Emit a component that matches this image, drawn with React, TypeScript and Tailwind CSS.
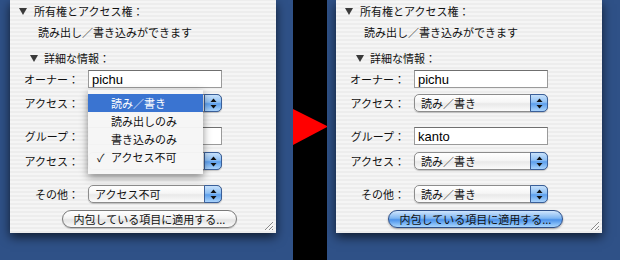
import React from "react";

const JP = "font-['Noto_Sans_CJK_JP','Liberation_Sans',sans-serif]";

function Tri() {
  return (
    <svg width="8" height="7" viewBox="0 0 8 7" className="shrink-0">
      <path d="M0 0H8L4 7Z" fill="#3a3a3a" />
    </svg>
  );
}

function Arrows() {
  return (
    <svg width="7" height="11" viewBox="0 0 7 11">
      <path d="M3.5 0.5L6.5 4H0.5Z" fill="#111" />
      <path d="M3.5 10.5L6.5 7H0.5Z" fill="#111" />
    </svg>
  );
}

function Popup({ text }: { text: string }) {
  return (
    <div className="flex h-[18px] w-[134px] items-stretch rounded-[5px] border border-[#8c8c8c] bg-[linear-gradient(#ffffff,#f6f6f6_45%,#e9e9e9_55%,#fbfbfb)] shadow-[0_1px_1px_rgba(0,0,0,0.2)]">
      <span className="flex flex-1 items-center pl-[6px] text-[11px] leading-none text-[#111]">{text}</span>
      <div className="-my-px -mr-px flex w-[18px] items-center justify-center rounded-r-[5px] border border-[#3a5f99] bg-[linear-gradient(#c7e1fb,#8fc0f4_45%,#5d9fec_55%,#a9d3fc)]">
        <Arrows />
      </div>
    </div>
  );
}

function Field({ text }: { text: string }) {
  return (
    <div className="flex h-[18px] w-[134px] items-center border border-[#9a9a9a] border-t-[#6f6f6f] bg-white pl-[3px] font-['Liberation_Sans',sans-serif] text-[13px] leading-none text-black">
      {text}
    </div>
  );
}

function Row({ label, children, className }: { label: string; children: React.ReactNode; className: string }) {
  return (
    <div className={"flex items-center " + className}>
      <div className="w-[70px] pr-[1px] text-right text-[11px] leading-none text-[#111]">{label}</div>
      <div className="ml-[8px]">{children}</div>
    </div>
  );
}

function Grip() {
  return (
    <svg width="12" height="12" viewBox="0 0 12 12" className="absolute bottom-[2px] right-[2px]">
      <path d="M11 3L3 11M11 7L7 11M11 10L10 11" stroke="#8a8a8a" strokeWidth="1" />
      <path d="M11.5 4L4 11.5M11.5 8L8 11.5" stroke="#ffffff" strokeWidth="1" />
    </svg>
  );
}

function Panel({ left }: { left: boolean }) {
  return (
    <div
      className={
        "relative h-[233px] w-[266px] bg-[repeating-linear-gradient(0deg,#ededed_0px,#ededed_2px,#f5f5f5_2px,#f5f5f5_4px)] shadow-[0_4px_10px_rgba(0,0,0,0.65)] " +
        JP
      }
    >
      <div className="flex flex-col">
        <div className="flex h-[22px] items-center pl-[9px]">
          <Tri />
          <span className="ml-[7px] text-[11px] leading-none text-[#111]">所有権とアクセス権：</span>
        </div>
        <div className="flex h-[20px] items-center pl-[28px] text-[11px] leading-none text-[#111]">
          読み出し／書き込みができます
        </div>
        <div className="mt-[6px] flex h-[20px] items-center pl-[20px]">
          <Tri />
          <span className="ml-[6px] text-[11px] leading-none text-[#111]">詳細な情報：</span>
        </div>
        <Row label="オーナー：" className="mt-[2px]">
          <Field text="pichu" />
        </Row>
        <Row label="アクセス：" className="mt-[6px]">
          <Popup text={left ? "" : "読み／書き"} />
        </Row>
        <Row label="グループ：" className="mt-[15px]">
          <Field text={left ? "" : "kanto"} />
        </Row>
        <Row label="アクセス：" className="mt-[7px]">
          <Popup text={left ? "" : "読み／書き"} />
        </Row>
        <Row label="その他：" className="mt-[15px]">
          <Popup text={left ? "アクセス不可" : "読み／書き"} />
        </Row>
        <div className="ml-[52px] mt-[7px]">
          <div
            className={
              "flex h-[18px] w-[175px] items-center justify-center rounded-full border text-[11px] leading-none text-[#111] " +
              (left
                ? "border-[#7a7a7a] bg-[linear-gradient(#ffffff,#f3f3f3_45%,#e3e3e3_55%,#fafafa)] shadow-[0_1px_1px_rgba(0,0,0,0.2)]"
                : "border-[#2e4f88] bg-[linear-gradient(#cfe5fd,#7fb6f2_45%,#4b92ea_55%,#a8d6fe)] shadow-[0_1px_2px_rgba(0,0,0,0.35)]")
            }
          >
            内包している項目に適用する...
          </div>
        </div>
      </div>
      {left && (
        <div className="absolute left-[78px] top-[90px] w-[115px] bg-[rgba(246,246,246,0.97)] py-[4px] shadow-[0_3px_8px_rgba(0,0,0,0.45)]">
          <div className="flex h-[18px] items-center bg-[#3a74d1] pl-[23px] text-[11px] leading-none text-white">読み／書き</div>
          <div className="flex h-[18px] items-center pl-[23px] text-[11px] leading-none text-[#111]">読み出しのみ</div>
          <div className="flex h-[18px] items-center pl-[23px] text-[11px] leading-none text-[#111]">書き込みのみ</div>
          <div className="flex h-[18px] items-center pl-[9px] text-[11px] leading-none text-[#111]">
            <span className="w-[14px]">✓</span>アクセス不可
          </div>
          <div className="h-[4px]" />
        </div>
      )}
      <Grip />
    </div>
  );
}

export default function App() {
  return (
    <div className="flex h-[260px] w-[620px] overflow-hidden">
      <div className="h-full w-[293px] bg-[#2f5187] pl-[10px]">
        <Panel left={true} />
      </div>
      <div className="flex h-full w-[34px] flex-col bg-black pt-[109px]">
        <svg width="35" height="36" viewBox="0 0 35 36">
          <path d="M0 0L35 17.5L0 36Z" fill="#ff0000" />
        </svg>
      </div>
      <div className="h-full w-[293px] bg-[#2f5187] pl-[9px]">
        <Panel left={false} />
      </div>
    </div>
  );
}
